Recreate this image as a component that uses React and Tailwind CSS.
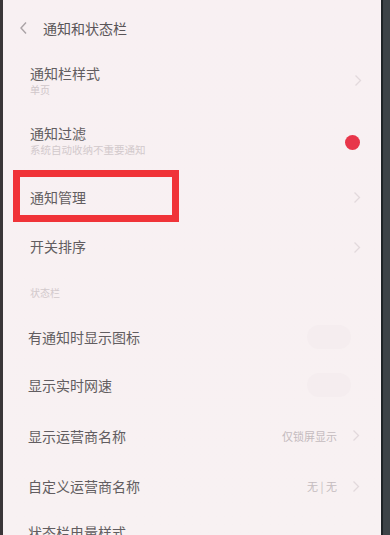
import React from "react";

const Chevron = ({ className = "" }) => (
  <svg width="8" height="13" viewBox="0 0 8 13" className={className}>
    <path d="M1.5 1.5 L6.5 6.5 L1.5 11.5" fill="none" stroke="#e2d9dc" strokeWidth="1.3" />
  </svg>
);

const Toggle = () => (
  <div className="w-[44px] h-[24px] rounded-full bg-[#f5edef]" />
);

export default function App() {
  return (
    <div
      className="w-[390px] h-[535px] overflow-hidden flex bg-[#f8f0f2]"
      style={{ fontFamily: '"Noto Sans CJK SC", "Noto Sans", sans-serif' }}
    >
      <div className="w-[3px] h-full bg-[#3a3638]" />
      <div className="flex-1 flex flex-col text-[#625d60] bg-gradient-to-b from-[#f8f0f2] to-[#f8f1f2]">
        {/* header */}
        <div className="h-[56px] shrink-0 flex items-center">
          <svg width="9" height="14" viewBox="0 0 9 14" className="ml-[16px]">
            <path d="M7 1.5 L2 7 L7 12.5" fill="none" stroke="#aaa3a6" strokeWidth="1.4" />
          </svg>
          <span className="ml-[15px] text-[14px] leading-[18px] text-[#5a5558]">通知和状态栏</span>
        </div>
        {/* row 1 */}
        <div className="h-[50px] shrink-0 flex items-center pl-[27px] pr-[19px]">
          <div className="flex-1 flex flex-col">
            <span className="text-[14px] leading-[18px]">通知栏样式</span>
            <span className="text-[10px] leading-[16px] text-[#cfc6c9]">单页</span>
          </div>
          <Chevron className="-mt-[2px]" />
        </div>
        {/* row 2 */}
        <div className="h-[69px] shrink-0 flex items-center pl-[27px] pr-[21px]">
          <div className="flex-1 flex flex-col">
            <span className="text-[14px] leading-[18px]">通知过滤</span>
            <span className="text-[10.5px] leading-[16px] text-[#d2c9cc]">系统自动收纳不重要通知</span>
          </div>
          <div className="w-[15px] h-[15px] rounded-full bg-[#e8364a] mt-[3px]" />
        </div>
        {/* row 3 */}
        <div className="relative h-[44px] shrink-0 flex items-center pl-[27px] pr-[20px]">
          <div className="absolute left-[10px] top-[-5px] w-[166px] h-[52px] border-[7px] border-[#f03338]" />
          <span className="flex-1 text-[14px] leading-[18px]">通知管理</span>
          <Chevron />
        </div>
        {/* row 4 */}
        <div className="h-[54px] shrink-0 flex items-center pl-[27px] pr-[20px]">
          <span className="flex-1 text-[14px] leading-[18px]">开关排序</span>
          <Chevron className="mt-[3px]" />
        </div>
        {/* section header */}
        <div className="h-[40px] shrink-0 flex items-center pl-[27px]">
          <span className="text-[10px] leading-[14px] text-[#d2c9cc]">状态栏</span>
        </div>
        <div className="h-[47px] shrink-0 flex items-center pl-[25px] pr-[30px]">
          <span className="flex-1 text-[14px] leading-[18px]">有通知时显示图标</span>
          <Toggle />
        </div>
        <div className="h-[50px] shrink-0 flex items-center pl-[25px] pr-[30px]">
          <span className="flex-1 text-[14px] leading-[18px]">显示实时网速</span>
          <Toggle />
        </div>
        <div className="h-[51px] shrink-0 flex items-center pl-[25px] pr-[21px]">
          <span className="flex-1 text-[14px] leading-[18px]">显示运营商名称</span>
          <span className="text-[11px] leading-[14px] text-[#c4bbbe] mr-[15px]">仅锁屏显示</span>
          <Chevron />
        </div>
        <div className="h-[50px] shrink-0 flex items-center pl-[25px] pr-[21px]">
          <span className="flex-1 text-[14px] leading-[18px]">自定义运营商名称</span>
          <span className="text-[11px] leading-[14px] text-[#c4bbbe] mr-[15px]">无 | 无</span>
          <Chevron />
        </div>
        <div className="h-[42px] shrink-0 flex items-center pl-[25px] pr-[21px]">
          <span className="flex-1 text-[14px] leading-[18px]">状态栏电量样式</span>
        </div>
      </div>
      <div className="w-[9px] h-full bg-[#3d4347] border-l-[2px] border-[#1f2427]" />
    </div>
  );
}
